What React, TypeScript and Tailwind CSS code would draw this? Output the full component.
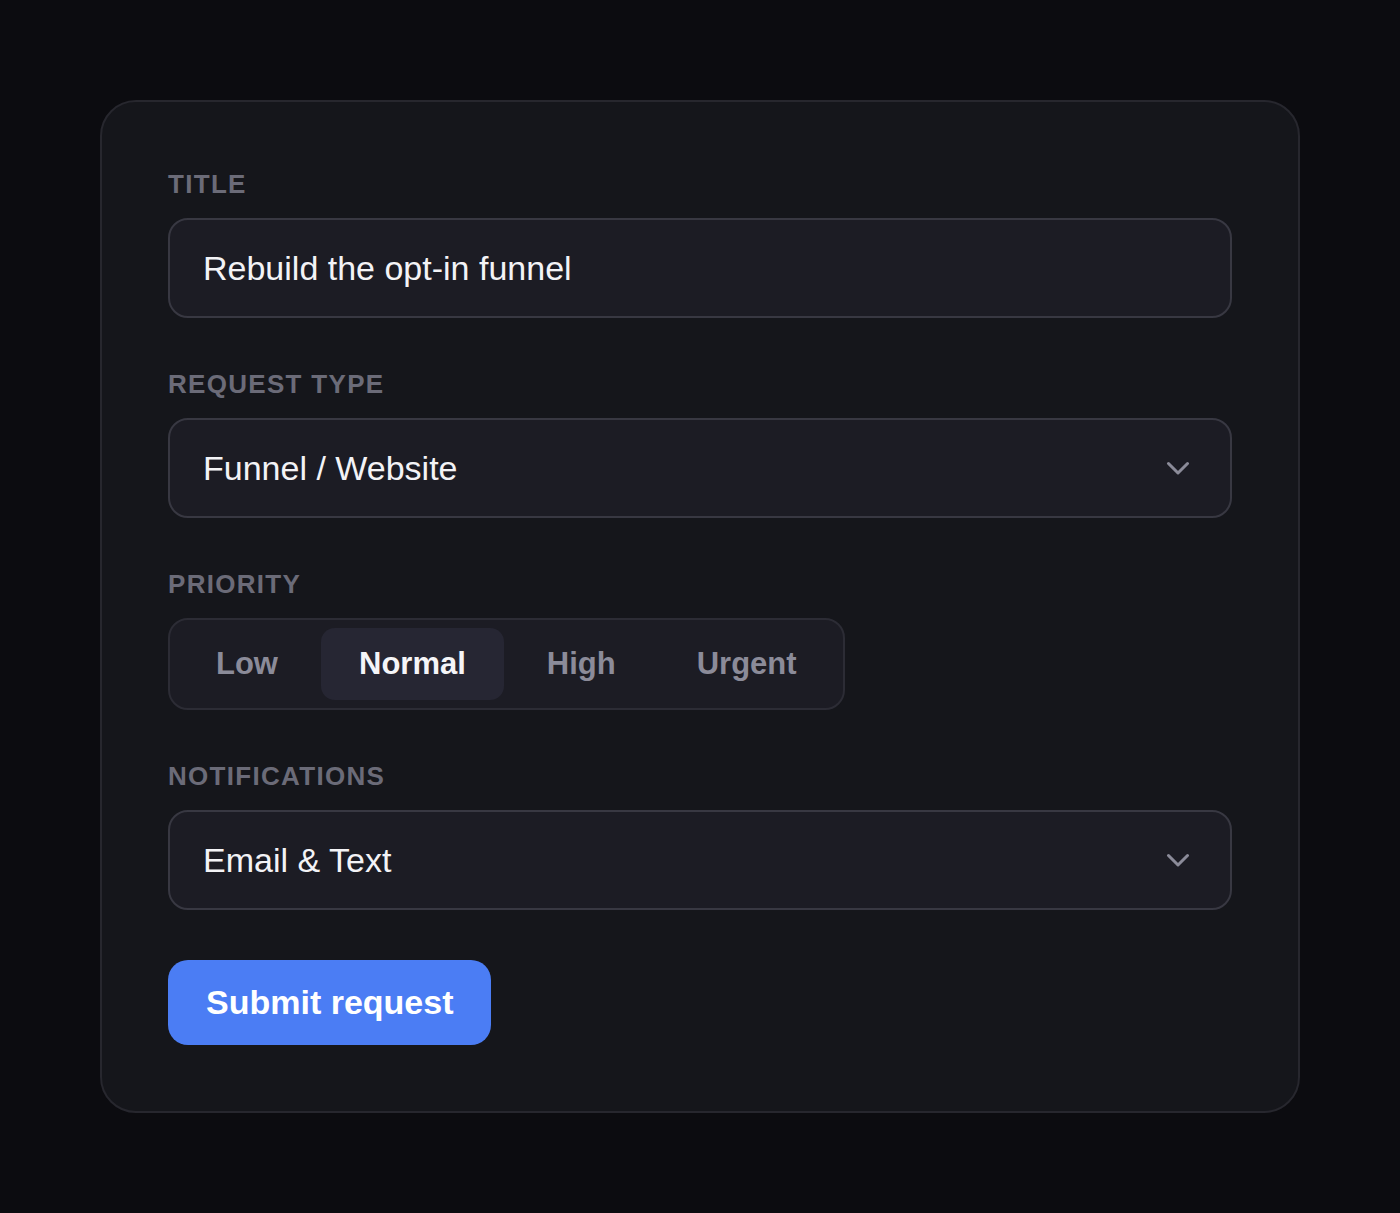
import { useState } from "react";

const priorities = ["Low", "Normal", "High", "Urgent"];

function Label({ children }: { children: string }) {
  return (
    <div className="text-[26px] leading-[32px] font-bold tracking-[1.3px] text-[#6b6b78] uppercase">
      {children}
    </div>
  );
}

function Chevron() {
  return (
    <svg
      width="24"
      height="14"
      viewBox="0 0 24 14"
      fill="none"
      stroke="#8b8b99"
      strokeWidth={3}
      strokeLinecap="round"
      strokeLinejoin="round"
      aria-hidden="true"
    >
      <path d="M2.5 2.5l9.5 9.5 9.5-9.5" />
    </svg>
  );
}

function SelectBox({ value }: { value: string }) {
  return (
    <div className="mt-[18px] h-[100px] flex items-center justify-between rounded-[20px] border-2 border-[#383842] bg-[#1c1c24] pl-[33px] pr-[40px]">
      <span className="text-[34px] text-[#f3f3f6]">{value}</span>
      <Chevron />
    </div>
  );
}

export default function App() {
  const [priority, setPriority] = useState("Normal");

  return (
    <div
      className="min-h-screen bg-[#0c0c10] flex justify-center pt-[100px] pb-[100px]"
      style={{ fontFamily: '"Liberation Sans", Arial, sans-serif' }}
    >
      <div className="w-[1200px] rounded-[36px] border-2 border-[#27272e] bg-[#15161b] p-[66px] flex flex-col gap-[50px]">
        <div>
          <Label>Title</Label>
          <div className="mt-[18px] h-[100px] flex items-center rounded-[20px] border-2 border-[#383842] bg-[#1c1c24] pl-[33px]">
            <span className="text-[34px] text-[#f3f3f6]">Rebuild the opt-in funnel</span>
          </div>
        </div>

        <div>
          <Label>Request type</Label>
          <SelectBox value="Funnel / Website" />
        </div>

        <div>
          <Label>Priority</Label>
          <div className="mt-[18px] inline-flex gap-[5px] rounded-[20px] border-2 border-[#2c2c35] bg-[#1c1c24] p-[8px]">
            {priorities.map((p) => (
              <button
                key={p}
                type="button"
                onClick={() => setPriority(p)}
                className={
                  p === priority
                    ? "h-[72px] px-[38px] rounded-[14px] bg-[#262633] text-[31px] font-bold text-[#f5f5f8]"
                    : "h-[72px] px-[38px] rounded-[14px] text-[31px] font-bold text-[#8b8b99]"
                }
              >
                {p}
              </button>
            ))}
          </div>
        </div>

        <div>
          <Label>Notifications</Label>
          <SelectBox value="Email & Text" />
        </div>

        <div>
          <button
            type="button"
            className="h-[85px] px-[38px] rounded-[20px] bg-[#4b7df4] text-[34px] font-bold text-white"
          >
            Submit request
          </button>
        </div>
      </div>
    </div>
  );
}
